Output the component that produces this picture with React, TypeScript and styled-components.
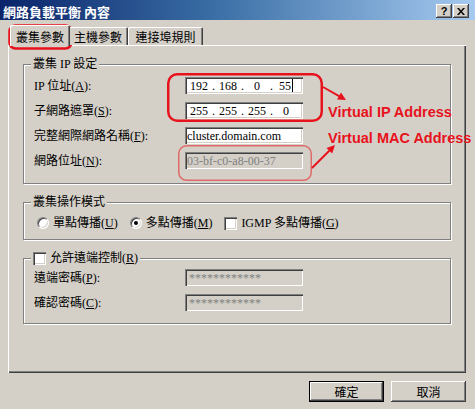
import React from "react";
import styled, { createGlobalStyle } from "styled-components";

const UI_FONT = `"Liberation Serif", "Noto Sans CJK TC", serif`;

const GlobalStyle = createGlobalStyle`
  html, body { margin: 0; padding: 0; background: #d4d0c8; }
  body { font-family: ${UI_FONT}; font-size: 12px; color: #000; }
`;

const Window = styled.div`
  position: relative;
  width: 475px;
  height: 409px;
  overflow: hidden;
  background: #d4d0c8;
  display: flex;
  flex-direction: column;
`;

const TitleBar = styled.div`
  box-sizing: border-box;
  height: 20px;
  flex: none;
  display: flex;
  align-items: center;
  justify-content: space-between;
  padding: 2px 6px 0 3px;
  background: linear-gradient(to right, #0a246a 0%, #3a6ea5 45%, #a6caf0 100%);
`;

const Title = styled.span`
  color: #fff;
  font-weight: bold;
  font-family: "Noto Sans CJK TC", sans-serif;
  font-size: 13px;
  line-height: 15px;
`;

const Controls = styled.div`
  display: flex;
  gap: 1px;
`;

const CaptionButton = styled.div`
  box-sizing: border-box;
  width: 16px;
  height: 14px;
  background: #d4d0c8;
  box-shadow: inset -1px -1px #404040, inset 1px 1px #fff, inset -2px -2px #808080;
  display: flex;
  align-items: center;
  justify-content: center;
  font: bold 11px "Liberation Sans", sans-serif;
  color: #000;
`;

const Body = styled.div`
  flex: 1;
  display: flex;
  flex-direction: column;
  padding: 5px 9px 0 8px;
`;

const TabStrip = styled.div`
  display: flex;
  align-items: flex-end;
  height: 20px;
  padding-left: 4px;
  position: relative;
  z-index: 1;
`;

const Tab = styled.div<{ $active?: boolean; $w: number }>`
  box-sizing: border-box;
  position: relative;
  z-index: ${(p) => (p.$active ? 2 : 1)};
  width: ${(p) => (p.$active ? p.$w + 4 : p.$w)}px;
  height: ${(p) => (p.$active ? 21 : 18)}px;
  margin: 0 ${(p) => (p.$active ? -2 : 0)}px ${(p) => (p.$active ? -1 : 0)}px;
  padding-top: ${(p) => (p.$active ? 3 : 1)}px;
  display: flex;
  align-items: center;
  justify-content: center;
  background: #d4d0c8;
  border-radius: 2px 2px 0 0;
  box-shadow: inset 1px 1px #fff, inset -1px 0 #404040, inset -2px 0 #808080;
  font-family: "Noto Sans CJK TC", sans-serif;
  font-size: 12px;
  line-height: 14px;
`;

const Panel = styled.div`
  box-sizing: border-box;
  height: 328px;
  padding: 19px 15px 0 15px;
  box-shadow: inset 1px 1px #fff, inset -1px -1px #404040, inset -2px -2px #808080;
  display: flex;
  flex-direction: column;
  gap: 18px;
`;

const Group = styled.div<{ $pt: number; $pb: number }>`
  position: relative;
  box-sizing: border-box;
  border: 1px solid #808080;
  box-shadow: inset 1px 1px #fff, 1px 1px #fff;
  padding: ${(p) => p.$pt}px 0 ${(p) => p.$pb}px 0;
`;

const GroupTitle = styled.div`
  position: absolute;
  top: -8px;
  left: 7px;
  padding: 0 2px;
  background: #d4d0c8;
  line-height: 14px;
  display: flex;
  align-items: center;
  gap: 4px;
`;

const FieldGrid = styled.div`
  display: grid;
  grid-template-columns: 151px 118px;
  row-gap: 8px;
  align-items: center;
  padding-left: 10px;
`;

const Label = styled.span`
  line-height: 14px;
  white-space: nowrap;
`;

const Field = styled.div<{ $disabled?: boolean; $pl?: number }>`
  box-sizing: border-box;
  width: 118px;
  height: 17px;
  padding-left: ${(p) => p.$pl ?? 2}px;
  background: ${(p) => (p.$disabled ? "#d4d0c8" : "#fff")};
  color: ${(p) => (p.$disabled ? "#808080" : "#000")};
  box-shadow: inset 1px 1px #808080, inset 2px 2px #404040, inset -1px -1px #fff, inset -2px -2px #d4d0c8;
  display: flex;
  align-items: center;
  line-height: 14px;
  white-space: nowrap;
  overflow: hidden;
`;

const IpSeg = styled.span`
  width: 24px;
  text-align: center;
  position: relative;
`;

const IpDot = styled.span`
  width: 5px;
  text-align: center;
`;

const Caret = styled.span`
  display: inline-block;
  width: 1px;
  height: 13px;
  background: #000;
  vertical-align: -2px;
  margin-left: 1px;
`;

const OptionRow = styled.div`
  display: flex;
  align-items: center;
  padding-left: 13px;
  height: 14px;
`;

const Option = styled.label`
  display: flex;
  align-items: center;
  gap: 4px;
  margin-right: 12px;
  line-height: 14px;
  white-space: nowrap;
`;

const Radio = styled.span<{ $checked?: boolean }>`
  box-sizing: border-box;
  width: 12px;
  height: 12px;
  border-radius: 50%;
  background: #fff;
  border: 1px solid;
  border-color: #808080 #fff #fff #808080;
  box-shadow: inset 1px 1px #404040, inset -1px -1px #d4d0c8;
  display: flex;
  align-items: center;
  justify-content: center;
  &::after {
    content: "";
    width: 4px;
    height: 4px;
    border-radius: 50%;
    background: ${(p) => (p.$checked ? "#000" : "transparent")};
  }
`;

const CheckBox = styled.span`
  box-sizing: border-box;
  width: 13px;
  height: 13px;
  background: #fff;
  box-shadow: inset 1px 1px #808080, inset 2px 2px #404040, inset -1px -1px #fff, inset -2px -2px #d4d0c8;
  flex: none;
`;

const ButtonRow = styled.div`
  display: flex;
  justify-content: flex-end;
  gap: 7px;
  margin-top: 8px;
`;

const DialogButton = styled.button<{ $default?: boolean }>`
  box-sizing: border-box;
  width: 75px;
  height: 21px;
  padding: 0;
  background: #d4d0c8;
  border: ${(p) => (p.$default ? "1px solid #000" : "none")};
  box-shadow: inset -1px -1px #404040, inset 1px 1px #fff, inset -2px -2px #808080;
  font-family: "Noto Sans CJK TC", sans-serif;
  font-size: 12px;
  line-height: 14px;
  color: #000;
`;

const Overlay = styled.svg`
  position: absolute;
  left: 0;
  top: 0;
  pointer-events: none;
`;

const Note = styled.span<{ $top: number }>`
  position: absolute;
  left: 328px;
  top: ${(p) => p.$top}px;
  font-family: "Liberation Sans", Arial, sans-serif;
  font-weight: bold;
  font-size: 14.5px;
  line-height: 1;
  color: #e8121c;
  white-space: nowrap;
`;

const Acc = ({ k }: { k: string }) => (
  <>
    (<u>{k}</u>)
  </>
);

const IpField = ({ parts, caret }: { parts: string[]; caret?: boolean }) => (
  <Field>
    {parts.map((p, i) => (
      <React.Fragment key={i}>
        <IpSeg>
          {p}
          {caret && i === parts.length - 1 ? <Caret /> : null}
        </IpSeg>
        {i < parts.length - 1 ? <IpDot>.</IpDot> : null}
      </React.Fragment>
    ))}
  </Field>
);

export default function App() {
  return (
    <>
      <GlobalStyle />
      <Window>
        <TitleBar>
          <Title>網路負載平衡 內容</Title>
          <Controls>
            <CaptionButton>?</CaptionButton>
            <CaptionButton>
              <svg width="8" height="7" viewBox="0 0 8 7">
                <path d="M0 0h2l2 2.5L6 0h2L5 3.5 8 7H6L4 4.5 2 7H0l3-3.5z" fill="#000" />
              </svg>
            </CaptionButton>
          </Controls>
        </TitleBar>
        <Body>
          <TabStrip>
            <Tab $active $w={56}>叢集參數</Tab>
            <Tab $w={60}>主機參數</Tab>
            <Tab $w={75}>連接埠規則</Tab>
          </TabStrip>
          <Panel>
            <Group $pt={12} $pb={14}>
              <GroupTitle>叢集 IP 設定</GroupTitle>
              <FieldGrid>
                <Label>
                  IP 位址<Acc k="A" />:
                </Label>
                <IpField parts={["192", "168", "0", "55"]} caret />
                <Label>
                  子網路遮罩<Acc k="S" />:
                </Label>
                <IpField parts={["255", "255", "255", "0"]} />
                <Label>
                  完整網際網路名稱<Acc k="F" />:
                </Label>
                <Field>cluster.domain.com</Field>
                <Label>
                  網路位址<Acc k="N" />:
                </Label>
                <Field $disabled>03-bf-c0-a8-00-37</Field>
              </FieldGrid>
            </Group>
            <Group $pt={13} $pb={9}>
              <GroupTitle>叢集操作模式</GroupTitle>
              <OptionRow>
                <Option>
                  <Radio />
                  <span>
                    單點傳播<Acc k="U" />
                  </span>
                </Option>
                <Option>
                  <Radio $checked />
                  <span>
                    多點傳播<Acc k="M" />
                  </span>
                </Option>
                <Option>
                  <CheckBox />
                  <span>
                    IGMP 多點傳播<Acc k="G" />
                  </span>
                </Option>
              </OptionRow>
            </Group>
            <Group $pt={10} $pb={12}>
              <GroupTitle>
                <CheckBox />
                <span>
                  允許遠端控制<Acc k="R" />
                </span>
              </GroupTitle>
              <FieldGrid>
                <Label>
                  遠端密碼<Acc k="P" />:
                </Label>
                <Field $disabled $pl={4}>************</Field>
                <Label>
                  確認密碼<Acc k="C" />:
                </Label>
                <Field $disabled $pl={4}>************</Field>
              </FieldGrid>
            </Group>
          </Panel>
          <ButtonRow>
            <DialogButton $default>確定</DialogButton>
            <DialogButton>取消</DialogButton>
          </ButtonRow>
        </Body>

        <Overlay width="475" height="409" viewBox="0 0 475 409">
          <rect x="9.5" y="25.5" width="62" height="23" rx="6" fill="none" stroke="#e8121c" strokeWidth="2.5" />
          <rect x="168.25" y="74.25" width="153.5" height="46.5" rx="9" fill="none" stroke="#e8121c" strokeWidth="2.5" />
          <rect x="178.75" y="145.75" width="132.5" height="34.5" rx="8" fill="none" stroke="#e06a6a" strokeWidth="1.5" />
          <line x1="323" y1="87" x2="339.5" y2="96.3" stroke="#e8121c" strokeWidth="2" />
          <polygon points="346,100 337,99.5 341,92.6" fill="#e8121c" />
          <line x1="312" y1="168" x2="329.5" y2="150.5" stroke="#e8121c" strokeWidth="2" />
          <polygon points="335,145 332.2,153.5 326.5,147.9" fill="#e8121c" />
        </Overlay>
        <Note $top={105}>Virtual IP Address</Note>
        <Note $top={131}>Virtual MAC Address</Note>
      </Window>
    </>
  );
}
